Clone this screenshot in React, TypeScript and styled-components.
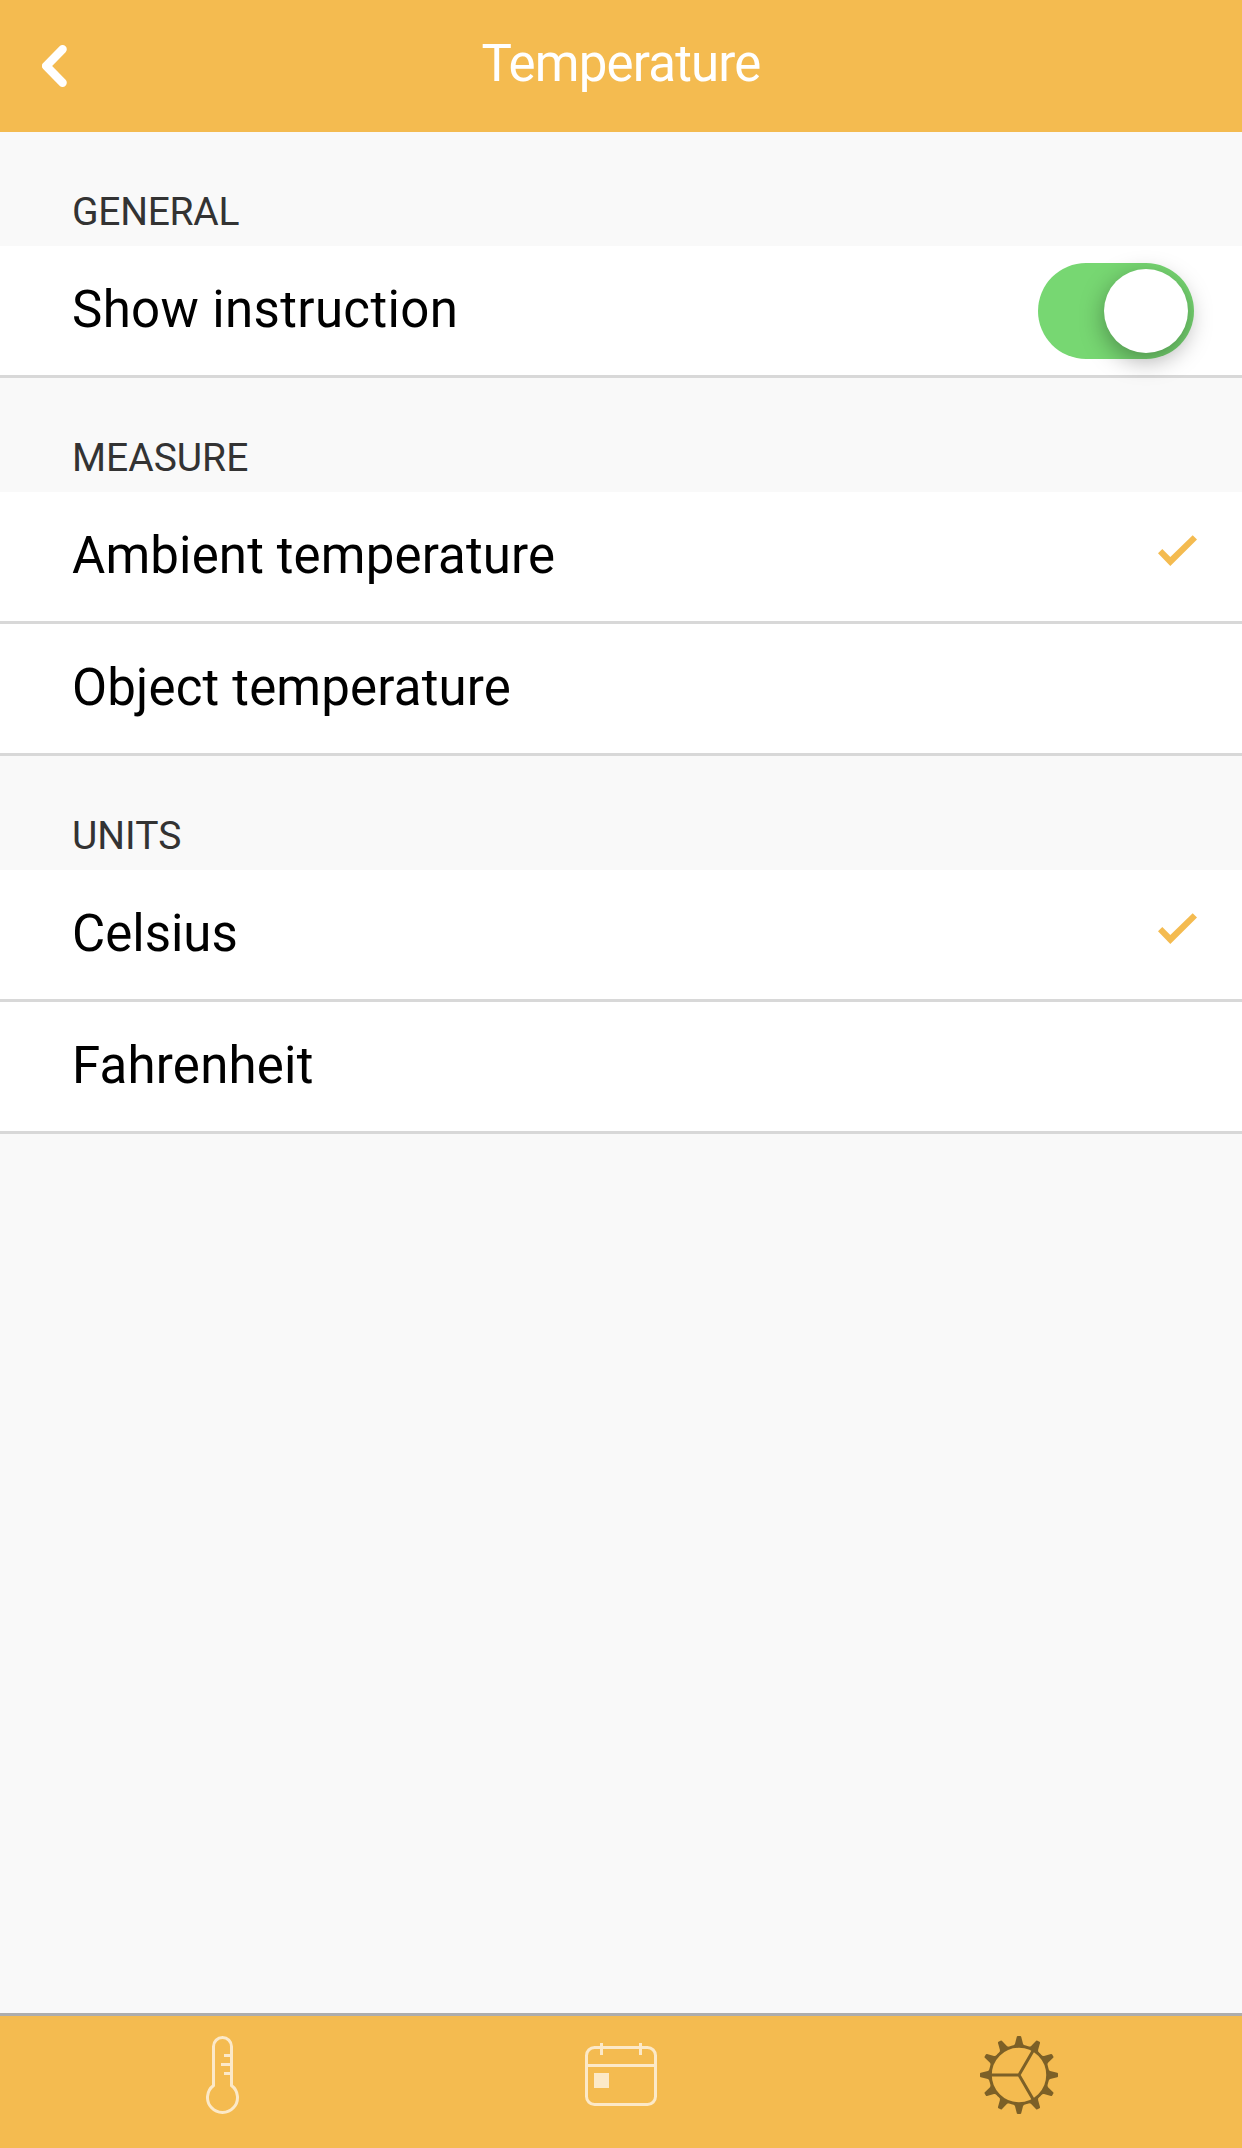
import React, { useState } from "react";
import styled, { createGlobalStyle } from "styled-components";

const accent = "#f4bb50";

const GlobalStyle = createGlobalStyle`
  * { box-sizing: border-box; }
  body { margin: 0; background: #f9f9f9; }
  button { font: inherit; border: 0; padding: 0; background: none; display: block; }
`;

const Screen = styled.div`
  display: flex;
  flex-direction: column;
  width: 100%;
  height: 2148px;
  background: #f9f9f9;
  font-family: Roboto, "Liberation Sans", sans-serif;
`;

const Header = styled.header`
  display: grid;
  grid-template-columns: 108px 1fr 108px;
  height: 132px;
  background: ${accent};
`;

const BackButton = styled.button`
  display: flex;
  align-items: center;
  padding-left: 42px;
`;

const Title = styled.h1`
  margin: 0;
  text-align: center;
  font-size: 51px;
  font-weight: 400;
  line-height: 127px;
  letter-spacing: -0.82px;
  color: #fff;
`;

const Content = styled.main`
  flex: 1;
`;

const SectionTitle = styled.h2<{ $tracking?: number }>`
  margin: 0;
  height: 114px;
  padding: 61px 72px 0;
  font-size: 39px;
  font-weight: 400;
  line-height: 39px;
  letter-spacing: ${(p) => p.$tracking ?? 0}px;
  color: #333;
`;

const Row = styled.div`
  display: flex;
  justify-content: space-between;
  height: 132px;
  padding: 0 45px 0 72px;
  background: #fff;
  border-bottom: 3px solid #d8d8d8;
`;

const RowLabel = styled.span<{ $tracking?: number }>`
  font-size: 51px;
  line-height: 127px;
  letter-spacing: ${(p) => p.$tracking ?? 0}px;
  color: #000;
`;

const CheckSlot = styled.span`
  padding-top: 43px;
  line-height: 0;
`;

const Toggle = styled.button<{ $on: boolean }>`
  display: flex;
  justify-content: ${(p) => (p.$on ? "flex-end" : "flex-start")};
  width: 156px;
  height: 96px;
  margin: 17px 3px 0 0;
  padding: 6px;
  border-radius: 48px;
  background: ${(p) => (p.$on ? "#77d772" : "#ddd")};
`;

const Knob = styled.span`
  width: 84px;
  height: 84px;
  border-radius: 50%;
  background: #fff;
  box-shadow: 0 7px 24px rgba(0, 0, 0, 0.35);
`;

const TabBar = styled.nav`
  display: grid;
  grid-template-columns: repeat(3, 1fr);
  height: 135px;
  padding: 20px 24px 0;
  border-top: 3px solid #adadad;
  background: ${accent};
`;

const Tab = styled.button<{ $active?: boolean }>`
  display: flex;
  justify-content: center;
  align-items: flex-start;
  color: ${(p) => (p.$active ? "#7c6027" : "#fce9c8")};
`;

const BackIcon = () => (
  <svg width="26" height="42" viewBox="0 0 26 42" fill="none" stroke="#fff" strokeWidth="8.4" strokeLinecap="round" strokeLinejoin="round">
    <path d="M20.6 4.2 4.2 21l16.4 16.8" />
  </svg>
);

const CheckIcon = () => (
  <svg width="39" height="31" viewBox="0 0 39 31" fill={accent}>
    <path d="M0 18.3 4.3 14l8 8L34.7.3 39 4.6 12.3 31z" />
  </svg>
);

const ThermometerIcon = () => (
  <svg width="34" height="78" viewBox="0 0 34 78" fill="none" stroke="currentColor" strokeWidth="3">
    <path d="M7.5 49.5v-39a9 9 0 0 1 18 0v39a15 15 0 1 1-18 0z" />
    <path d="M18 19.5h7M15 28.5h10M18 37.5h7" />
  </svg>
);

const CalendarIcon = () => (
  <svg width="72" height="78" viewBox="0 0 72 78" fill="none" stroke="currentColor" strokeWidth="3">
    <rect x="1.5" y="11.5" width="69" height="57" rx="8" />
    <path d="M1.5 29.5h69M16.5 7v12M55.5 7v12" />
    <path d="M9 37h15v15H9z" fill="currentColor" stroke="none" />
  </svg>
);

const GearIcon = () => (
  <svg width="78" height="78" viewBox="-39 -39 78 78" fill="none" stroke="currentColor" strokeWidth="3">
    <circle r="28.7" />
    <path d="M0 0h-28M0 0l14.2-24.6M0 0l14.2 24.6" />
    {Array.from({ length: 12 }, (_, i) => (
      <path
        key={i}
        d="M-7.5-28.3Q-4.6-29.3-4-31.2L-2.2-38.2Q-2-39-1.2-39H1.2Q2-39 2.2-38.2L4-31.2Q4.6-29.3 7.5-28.3z"
        fill="currentColor"
        stroke="none"
        transform={`rotate(${i * 30})`}
      />
    ))}
  </svg>
);

type OptionProps = { label: string; selected: boolean; onSelect: () => void; tracking?: number };

const Option = ({ label, selected, onSelect, tracking }: OptionProps) => (
  <Row onClick={onSelect}>
    <RowLabel $tracking={tracking}>{label}</RowLabel>
    {selected && (
      <CheckSlot>
        <CheckIcon />
      </CheckSlot>
    )}
  </Row>
);

export default function App() {
  const [instruction, setInstruction] = useState(true);
  const [measure, setMeasure] = useState("ambient");
  const [unit, setUnit] = useState("celsius");

  return (
    <Screen>
      <GlobalStyle />
      <Header>
        <BackButton aria-label="Back">
          <BackIcon />
        </BackButton>
        <Title>Temperature</Title>
      </Header>
      <Content>
        <SectionTitle $tracking={-0.3}>GENERAL</SectionTitle>
        <Row>
          <RowLabel $tracking={0.36}>Show instruction</RowLabel>
          <Toggle $on={instruction} role="switch" aria-checked={instruction} onClick={() => setInstruction(!instruction)}>
            <Knob />
          </Toggle>
        </Row>
        <SectionTitle>MEASURE</SectionTitle>
        <Option label="Ambient temperature" tracking={0.15} selected={measure === "ambient"} onSelect={() => setMeasure("ambient")} />
        <Option label="Object temperature" tracking={0.18} selected={measure === "object"} onSelect={() => setMeasure("object")} />
        <SectionTitle>UNITS</SectionTitle>
        <Option label="Celsius" selected={unit === "celsius"} onSelect={() => setUnit("celsius")} />
        <Option label="Fahrenheit" tracking={0.22} selected={unit === "fahrenheit"} onSelect={() => setUnit("fahrenheit")} />
      </Content>
      <TabBar>
        <Tab aria-label="Thermometer">
          <ThermometerIcon />
        </Tab>
        <Tab aria-label="Calendar">
          <CalendarIcon />
        </Tab>
        <Tab $active aria-label="Settings">
          <GearIcon />
        </Tab>
      </TabBar>
    </Screen>
  );
}
